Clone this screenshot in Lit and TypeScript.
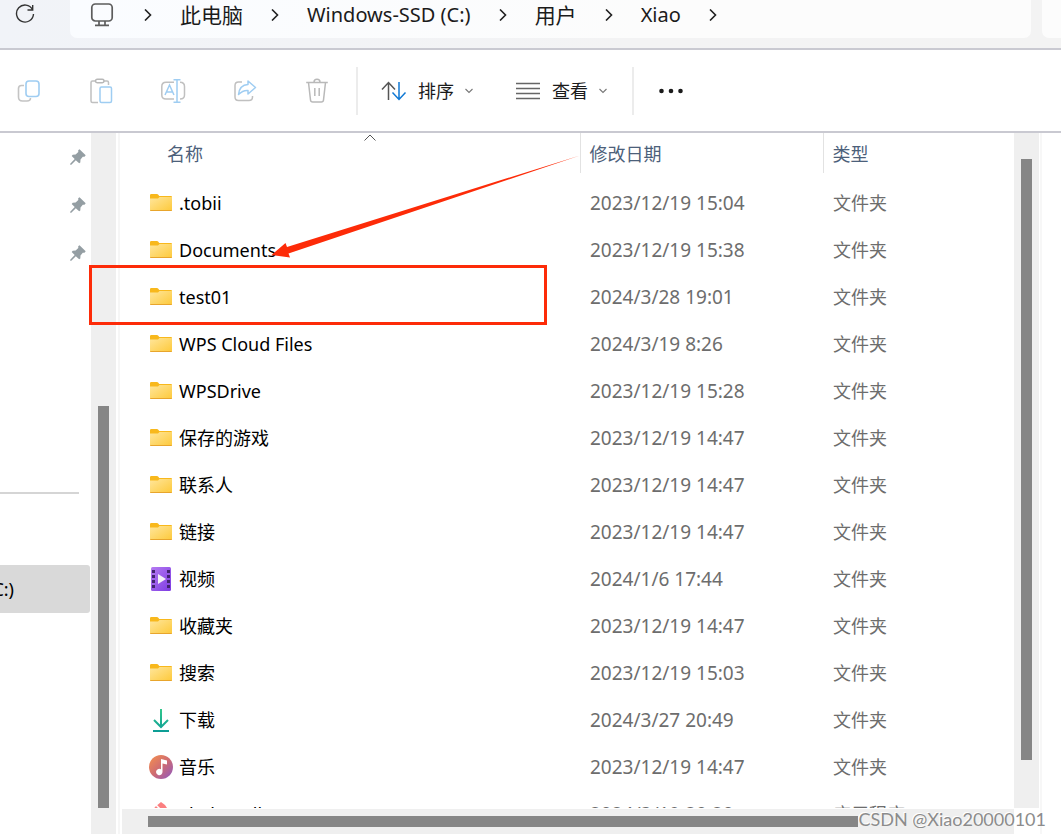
import { LitElement, html, css, svg } from "lit";
import { customElement, property } from "lit/decorators.js";

type Kind = "folder" | "video" | "download" | "music" | "app";

interface Entry {
  name: string;
  date: string;
  type: string;
  kind: Kind;
}

const ENTRIES: Entry[] = [
  { name: ".tobii", date: "2023/12/19 15:04", type: "文件夹", kind: "folder" },
  { name: "Documents", date: "2023/12/19 15:38", type: "文件夹", kind: "folder" },
  { name: "test01", date: "2024/3/28 19:01", type: "文件夹", kind: "folder" },
  { name: "WPS Cloud Files", date: "2024/3/19 8:26", type: "文件夹", kind: "folder" },
  { name: "WPSDrive", date: "2023/12/19 15:28", type: "文件夹", kind: "folder" },
  { name: "保存的游戏", date: "2023/12/19 14:47", type: "文件夹", kind: "folder" },
  { name: "联系人", date: "2023/12/19 14:47", type: "文件夹", kind: "folder" },
  { name: "链接", date: "2023/12/19 14:47", type: "文件夹", kind: "folder" },
  { name: "视频", date: "2024/1/6 17:44", type: "文件夹", kind: "video" },
  { name: "收藏夹", date: "2023/12/19 14:47", type: "文件夹", kind: "folder" },
  { name: "搜索", date: "2023/12/19 15:03", type: "文件夹", kind: "folder" },
  { name: "下载", date: "2024/3/27 20:49", type: "文件夹", kind: "download" },
  { name: "音乐", date: "2023/12/19 14:47", type: "文件夹", kind: "music" },
  { name: "abebanell", date: "2024/3/19 20:20", type: "应用程序", kind: "app" },
];

const GLYPHS: Record<Kind, unknown> = {
  folder: svg`
    <defs><linearGradient id="f" x1="0" y1="0" x2="1" y2="1">
      <stop offset="0" stop-color="#ffe69c"/><stop offset="1" stop-color="#fdc93a"/>
    </linearGradient></defs>
    <path d="M1 4.2Q1 3 2.2 3H8q.7 0 1.100.5L10.300 5H22q1 0 1 1v4H1z" fill="#f8b81c"/>
    <path d="M1 7.500H9L10.500 6H23V19q0 1-1 1H2q-1 0-1-1z" fill="url(#f)"/>
    <path d="M1 19q0 1 1 1H22q1 0 1-1z" fill="#e8a52c"/>`,
  video: svg`
    <defs><linearGradient id="v" x1="0" y1="0" x2="1" y2="1">
      <stop offset="0" stop-color="#b57bf2"/><stop offset="1" stop-color="#7d3be2"/>
    </linearGradient></defs>
    <rect x="2" y="0" width="20" height="24" rx="1.500" fill="url(#v)"/>
    <path d="M3 3h3v3H3zM3 8h3v3H3zM3 13h3v3H3zM3 18h3v3H3zM18 3h3v3h-3zM18 8h3v3h-3zM18 13h3v3h-3zM18 18h3v3h-3z" fill="#42246f"/>
    <path d="M9 7l8 5-8 5z" fill="#f3f0f6"/>`,
  download: svg`
    <defs><linearGradient id="d" x1="0" y1="0" x2="0" y2="24" gradientUnits="userSpaceOnUse">
      <stop offset="0" stop-color="#35c98c"/><stop offset="1" stop-color="#0b9c95"/>
    </linearGradient></defs>
    <path d="M12 1V18M5 12l7 7 7-7M4 23H20" fill="none" stroke="url(#d)" stroke-width="2"/>`,
  music: svg`
    <defs><linearGradient id="m" x1=".1" y1=".1" x2=".9" y2=".9">
      <stop offset="0" stop-color="#ef8a54"/><stop offset=".5" stop-color="#cf6c72"/><stop offset="1" stop-color="#9a5cb4"/>
    </linearGradient></defs>
    <circle cx="12" cy="12" r="12" fill="url(#m)"/>
    <path d="M12 4l6 1.500V9.500L13.500 8.500V17a3.200 3.200 0 1 1-1.500-2.700z" fill="#fff"/>`,
  app: svg`
    <path d="M12 0l4 3 6 9-10 10L2 12 6 5z" fill="#fb7f80"/>
    <path d="M7 3l5 5" stroke="#fff" stroke-width="1.500"/>`,
};

/** Icon shown before a file name. */
@customElement("file-icon")
export class FileIcon extends LitElement {
  @property() kind: Kind = "folder";

  static styles = css`
    :host { display: block; flex: none; width: 24px; height: 24px; }
    .glyph { display: block; width: 24px; height: 24px; }
  `;

  render() {
    return html`<svg class="glyph" viewBox="0 0 24 24" aria-hidden="true">${GLYPHS[this.kind]}</svg>`;
  }
}

const chevron = html`<svg class="chevron" width="8" height="12" viewBox="0 0 8 12" aria-hidden="true">
  <path d="M1 .5L6.500 6 1 11.500" fill="none" stroke="#222" stroke-width="1.600"/></svg>`;
const caret = html`<svg width="8" height="6" viewBox="0 0 8 6" aria-hidden="true">
  <path d="M.5 1L4 4.500 7.500 1" fill="none" stroke="#777" stroke-width="1.100"/></svg>`;
const pin = html`<svg width="16" height="16" viewBox="0 0 16 16" aria-hidden="true">
  <path d="M9.500.3L15.700 6.300 14.500 7.800 12.800 7.700 10.500 10.500 10.300 13.500 9.200 14.300 5.800 11.200 1.300 15.800.2 15.800.2 14.700 4.700 10.100 1.700 7 2.700 5.800 5.600 5.500 8.300 3.100 8.200 1.300z" fill="#949ea3"/></svg>`;

@customElement("app-root")
export class AppRoot extends LitElement {
  static styles = css`
    :host {
      display: flex;
      flex-direction: column;
      box-sizing: border-box;
      height: 100vh;
      padding-bottom: 2px;
      overflow: hidden;
      background: #fff;
      color: #000;
      font: 18px/24px "Noto Sans", "Noto Sans CJK SC", sans-serif;
    }
    button {
      display: flex;
      align-items: center;
      justify-content: center;
      padding: 0;
      border: 0;
      background: none;
      color: inherit;
      font: inherit;
    }
    svg { display: block; flex: none; }

    .address {
      display: flex;
      flex: none;
      gap: 11px;
      height: 38px;
      padding-bottom: 10px;
      border-bottom: 2px solid #c9c9d1;
      background: linear-gradient(90deg, #f1f3f8, #f3f3f4 60%, #f3f3f3);
    }
    .refresh { width: 59px; padding: 0 9px 10px 0; box-sizing: border-box; }
    .path {
      display: flex;
      flex: 1;
      align-items: center;
      padding: 0 20px 8px 20px;
      border-radius: 0 0 7px 7px;
      background: linear-gradient(90deg, #fafcff, #fcfcfc 60%);
      color: #1b1b1b;
      font-size: 21px;
      line-height: 30px;
      white-space: nowrap;
    }
    .path .latin { font-size: 20px; }
    .path .chevron { margin: 0 28px; }
    .path .pc { margin-right: 2px; }
    .search { width: 19px; border-radius: 0 0 0 7px; background: #fcfcfc; }

    .tools {
      display: flex;
      flex: none;
      align-items: center;
      height: 81px;
      border-bottom: 2px solid #c9c9d1;
      color: #1b1b1b;
    }
    .tool { width: 72px; height: 48px; }
    .tool.first { width: 65px; padding-right: 7px; }
    .menu { gap: 11px; height: 48px; }
    .sep { flex: none; width: 2px; height: 48px; background: #ececec; }
    .tool + .sep { margin-left: 3px; }
    .sort { margin: 0 42px 0 23px; }
    .view { margin-right: 25px; }
    .more { width: 74px; height: 48px; }

    .body { display: flex; flex: 1; min-height: 0; }
    .side { flex: none; width: 91px; overflow: hidden; }
    .pinned { display: flex; justify-content: flex-end; align-items: center; height: 48px; padding-right: 5px; }
    .rule { height: 2px; margin: 215px 12px 71px 0; border: 0; background: #d5d5d5; }
    .drive {
      justify-content: flex-end;
      width: 90px;
      height: 48px;
      padding-right: 76px;
      border-radius: 0 3px 3px 0;
      background: #d9d9d9;
      overflow: hidden;
      white-space: nowrap;
    }
    .track { flex: none; display: flex; background: #efefef; }
    .vertical { flex-direction: column; align-items: center; width: 25px; }
    .horizontal { align-items: center; height: 25px; margin: 1px 0 0 2px; padding: 0 0 0 26px; }
    .thumb { background: #868686; }
    .vertical .thumb { width: 11px; }
    .horizontal .thumb { width: 82%; height: 11px; }
    .side-thumb { margin: 273px 0 26px; flex: 1; }
    .list-thumb { margin: 26px 0 48px; flex: 1; }
    .edge { flex: none; width: 2px; margin: 0 0 0 2px; background: #f6f6f6; }
    .right-edge { flex: none; width: 2px; margin: 0 19px 0 1px; background: #f7f7f7; }

    .content { display: flex; flex: 1; flex-direction: column; min-width: 0; }
    .files { position: relative; flex: 1; min-height: 0; overflow: hidden; }
    .right { display: flex; flex: none; }
    .right .vertical { margin-bottom: 26px; }

    table { width: 100%; border-collapse: collapse; table-layout: fixed; }
    .col-name { width: 460px; }
    .col-date { width: 243px; }
    th {
      height: 40px;
      padding: 2px 0 0 9px;
      border-left: 1px solid #e2e2e2;
      box-sizing: border-box;
      color: #4c607a;
      font-weight: 400;
      text-align: left;
    }
    th.by-name { border-left: 0; padding-left: 47px; }
    thead::after { content: ""; display: block; height: 6px; }
    td { height: 47px; padding: 0 0 0 10px; color: #6d6d6d; white-space: nowrap; }
    td.name { padding-left: 29px; color: #000; }
    td.date { font-size: 19px; }
    .label { display: flex; align-items: center; gap: 6px; }
    .order { position: absolute; top: 1px; left: 244px; }

    .marker { position: absolute; left: 89px; top: 265px; width: 458px; height: 60px; box-sizing: border-box; border: 3px solid #fd2b08; }
    .arrow { position: absolute; left: 270px; top: 150px; }
    .credit {
      position: absolute;
      right: 15px;
      bottom: 5px;
      color: #8c8c8c;
      font: 18px/24px Lato, sans-serif;
      text-shadow: -1px -1px 0 #fff;
      white-space: nowrap;
    }
  `;

  private crumb(name: string, latin = false) {
    return html`${chevron}<button class=${latin ? "latin" : "han"}>${name}</button>`;
  }

  private row(entry: Entry) {
    return html`<tr>
      <td class="name"><span class="label"><file-icon kind=${entry.kind}></file-icon>${entry.name}</span></td>
      <td class="date">${entry.date}</td>
      <td>${entry.type}</td>
    </tr>`;
  }

  private toolbar() {
    return html`<div class="tools" role="toolbar">
      <button class="tool first" aria-label="复制">
        <svg width="24" height="24" viewBox="0 0 24 24" fill="none" stroke-width="1.600">
          <path d="M7 6.500H4.500Q1.500 6.500 1.500 9.500V18q0 4 4 4H10q3.500 0 3.500-3" stroke="#c4c4c4"/>
          <rect x="9" y="2" width="13" height="15.500" rx="3" stroke="#9fcdf2"/>
        </svg>
      </button>
      <button class="tool" aria-label="粘贴">
        <svg width="24" height="26" viewBox="0 0 24 26" fill="none" stroke-width="1.500">
          <path d="M6 3H3.500Q2 3 2 4.500V23q0 1.500 1.500 1.500H9M15 3h3q1.500 0 1.500 1.500V7" stroke="#c0c0c0"/>
          <rect x="6.500" y="1.200" width="8.500" height="3.500" rx="1.700" stroke="#b8b8b8"/>
          <rect x="11" y="9" width="11.500" height="15.500" rx="1.500" stroke="#9fcdf2"/>
        </svg>
      </button>
      <button class="tool" aria-label="重命名">
        <svg width="26" height="26" viewBox="0 0 26 26" fill="none" stroke-width="1.500">
          <path d="M14 4.200H6Q1.800 4.200 1.800 8.500v8.500Q1.800 21 6 21h8M20 4.200q4.500 0 4.500 4.300v8.500q0 4-4.500 4" stroke="#c0c0c0"/>
          <path d="M5 17L9.500 7 14 17M6.500 14h6M17 1.700V24.300M13.500 1.700h7M13.500 24.300h7" stroke="#9fcdf2"/>
        </svg>
      </button>
      <button class="tool" aria-label="共享">
        <svg width="24" height="24" viewBox="0 0 24 24" fill="none" stroke-width="1.500" stroke-linejoin="round">
          <path d="M9 3H5.500Q2 3 2 6.500V18q0 3.500 3.500 3.500H16q3.500 0 3.500-3.500V17" stroke="#c0c0c0"/>
          <path d="M15 2l7.500 6.500L15 15V11.500q-5-.5-9.500 4Q6.500 6 15 5.500z" stroke="#9fcdf2"/>
        </svg>
      </button>
      <button class="tool" aria-label="删除">
        <svg width="24" height="26" viewBox="0 0 24 26" fill="none" stroke="#b9b9b9" stroke-width="1.500">
          <path d="M1.200 4.500h21.600M3.500 4.500L5.500 22q.2 2 2.200 2h8.600q2 0 2.200-2l2-17.500M9 4.200q0-3 3-3t3 3M9.800 10v8M14.200 10v8"/>
        </svg>
      </button>
      <span class="sep"></span>
      <button class="menu sort">
        <svg width="26" height="20" viewBox="0 0 26 20" fill="none" stroke-width="1.500">
          <path d="M7.500 19V1.500M1 8.500l6.500-7 6.500 7" stroke="#555"/>
          <path d="M18 1V18.500M11.500 11.500l6.500 7 6.500-7" stroke="#0f78d4"/>
        </svg>排序${caret}
      </button>
      <button class="menu view">
        <svg width="26" height="18" viewBox="0 0 26 18" stroke="#666" stroke-width="1.400">
          <path d="M1 1.500h24M1 6.500h24M1 11.500h24M1 16.500h24"/>
        </svg>查看${caret}
      </button>
      <span class="sep"></span>
      <button class="more" aria-label="更多">
        <svg width="24" height="6" viewBox="0 0 24 6" fill="#1b1b1b">
          <circle cx="2.500" cy="3" r="2.300"/><circle cx="12" cy="3" r="2.300"/><circle cx="21.500" cy="3" r="2.300"/>
        </svg>
      </button>
    </div>`;
  }

  render() {
    return html`
      <header class="address">
        <button class="refresh" aria-label="刷新">
          <svg width="20" height="20" viewBox="0 0 20 20" fill="none" stroke="#333" stroke-width="1.400">
            <path d="M17.500 5.500A8.500 8.500 0 1 0 18.500 10M17.700 1V6H12.500"/>
          </svg>
        </button>
        <nav class="path" aria-label="路径">
          <svg class="pc" width="24" height="24" viewBox="0 0 24 24" fill="none" stroke="#5c5c5c" stroke-width="1.700">
            <rect x="1.800" y="1" width="20.400" height="17" rx="3.500"/><path d="M9 18v4M15 18v4M5 22.300h14"/>
          </svg>
          ${this.crumb("此电脑")}${this.crumb("Windows-SSD (C:)", true)}${this.crumb("用户")}${this.crumb("Xiao", true)}${chevron}
        </nav>
        <div class="search"></div>
      </header>
      ${this.toolbar()}
      <main class="body">
        <aside class="side">
          ${[0, 1, 2].map(() => html`<div class="pinned">${pin}</div>`)}
          <hr class="rule" />
          <button class="drive">Windows-SSD (C:)</button>
        </aside>
        <div class="track vertical"><div class="thumb side-thumb"></div></div>
        <div class="edge"></div>
        <section class="content">
          <div class="files">
            <table>
              <colgroup><col class="col-name" /><col class="col-date" /><col /></colgroup>
              <thead><tr><th class="by-name">名称</th><th>修改日期</th><th>类型</th></tr></thead>
              <tbody>${ENTRIES.map((e) => this.row(e))}</tbody>
            </table>
            <svg class="order" width="12" height="7" viewBox="0 0 12 7" fill="none" stroke="#555">
              <path d="M.5 6.500L6 1l5.500 5.500"/>
            </svg>
          </div>
          <div class="track horizontal"><div class="thumb"></div></div>
        </section>
        <div class="right">
          <div class="track vertical"><div class="thumb list-thumb"></div></div>
          <div class="right-edge"></div>
        </div>
      </main>
      <div class="marker"></div>
      <svg class="arrow" width="312" height="110" viewBox="0 0 312 110" aria-hidden="true">
        <path d="M1.500 105L15.500 93l1.500 4L310 5.500 18.500 103.500l1.500 4z" fill="#fd2b08"/>
      </svg>
      <span class="credit">CSDN @Xiao20000101</span>
    `;
  }
}
